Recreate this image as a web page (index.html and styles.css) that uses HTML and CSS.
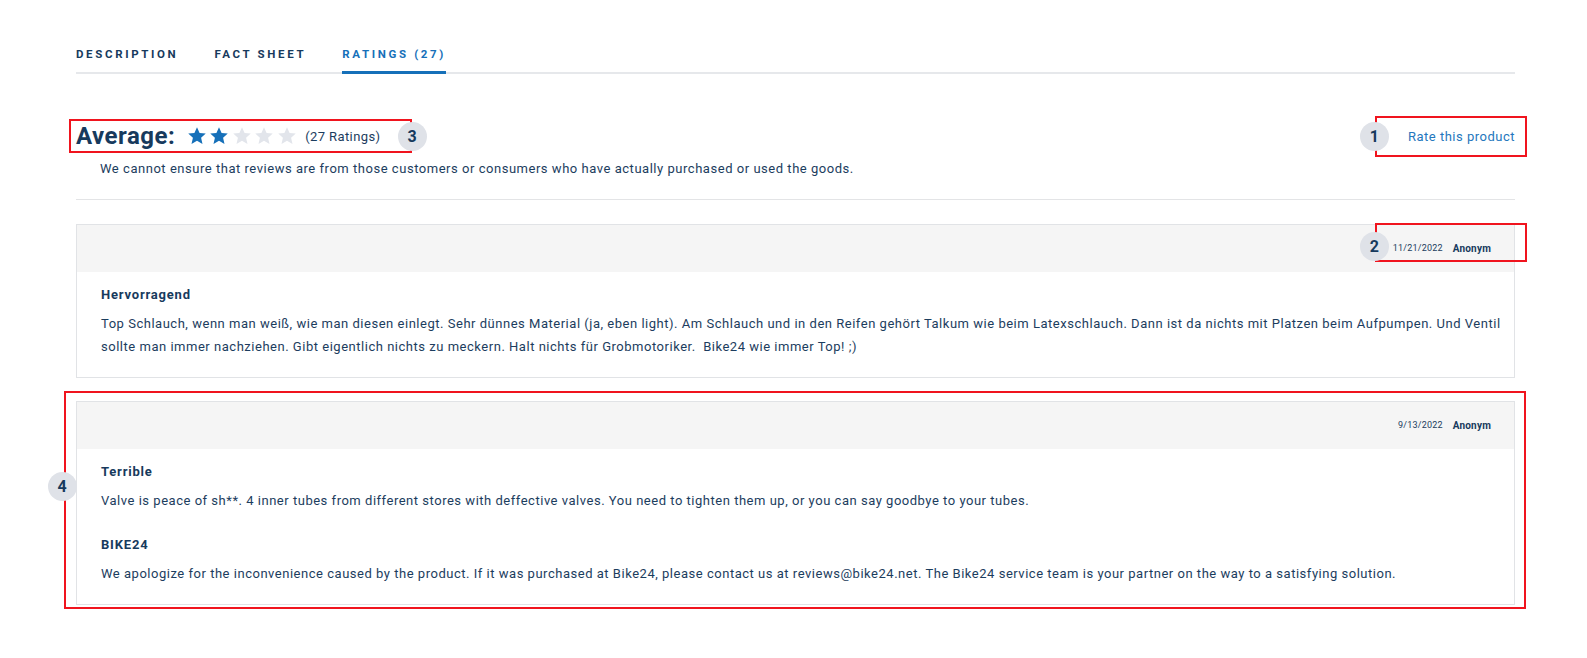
FILE: index.html
```html
<!DOCTYPE html>
<html lang="en">
<head>
<meta charset="utf-8">
<title>Ratings</title>
<link rel="stylesheet" href="styles.css">
</head>
<body>
<div class="page">
  <nav class="tabs">
    <a class="tab">DESCRIPTION</a>
    <a class="tab">FACT SHEET</a>
    <a class="tab tab-active">RATINGS (27)</a>
  </nav>

  <section class="summary">
    <div class="summary-row">
      <div class="average">
        <h2 class="average-title">Average:</h2>
        <span class="stars">
          <svg class="star on" viewBox="0 0 24 24"><path d="M12 1.5l3.1 6.9 7.4.7-5.6 5 1.7 7.4L12 17.6l-6.6 3.9 1.7-7.4-5.6-5 7.4-.7z"/></svg>
          <svg class="star on" viewBox="0 0 24 24"><path d="M12 1.5l3.1 6.9 7.4.7-5.6 5 1.7 7.4L12 17.6l-6.6 3.9 1.7-7.4-5.6-5 7.4-.7z"/></svg>
          <svg class="star" viewBox="0 0 24 24"><path d="M12 1.5l3.1 6.9 7.4.7-5.6 5 1.7 7.4L12 17.6l-6.6 3.9 1.7-7.4-5.6-5 7.4-.7z"/></svg>
          <svg class="star" viewBox="0 0 24 24"><path d="M12 1.5l3.1 6.9 7.4.7-5.6 5 1.7 7.4L12 17.6l-6.6 3.9 1.7-7.4-5.6-5 7.4-.7z"/></svg>
          <svg class="star" viewBox="0 0 24 24"><path d="M12 1.5l3.1 6.9 7.4.7-5.6 5 1.7 7.4L12 17.6l-6.6 3.9 1.7-7.4-5.6-5 7.4-.7z"/></svg>
        </span>
        <span class="count">(27 Ratings)</span>
        <span class="annot annot-average"><span class="badge badge-right">3</span></span>
      </div>
      <div class="rate-wrap">
        <a class="rate">Rate this product</a>
        <span class="annot annot-rate"><span class="badge badge-left">1</span></span>
      </div>
    </div>
    <p class="disclaimer">We cannot ensure that reviews are from those customers or consumers who have actually purchased or used the goods.</p>
  </section>

  <div class="reviews">
    <article class="review">
      <header class="review-head">
        <span class="date">11/21/2022</span>
        <span class="author">Anonym</span>
        <span class="annot annot-meta"><span class="badge badge-meta">2</span></span>
      </header>
      <div class="review-body">
        <h3 class="review-title">Hervorragend</h3>
        <p class="review-text">Top Schlauch, wenn man weiß, wie man diesen einlegt. Sehr dünnes Material (ja, eben light). Am Schlauch und in den Reifen gehört Talkum wie beim Latexschlauch. Dann ist da nichts mit Platzen beim Aufpumpen. Und Ventil sollte man immer nachziehen. Gibt eigentlich nichts zu meckern. Halt nichts für Grobmotoriker.&nbsp; Bike24 wie immer Top! ;)</p>
      </div>
    </article>

    <article class="review review-marked">
      <header class="review-head">
        <span class="date">9/13/2022</span>
        <span class="author">Anonym</span>
      </header>
      <div class="review-body">
        <h3 class="review-title">Terrible</h3>
        <p class="review-text">Valve is peace of sh**. 4 inner tubes from different stores with deffective valves. You need to tighten them up, or you can say goodbye to your tubes.</p>
        <h3 class="review-title reply-title">BIKE24</h3>
        <p class="review-text">We apologize for the inconvenience caused by the product. If it was purchased at Bike24, please contact us at reviews@bike24.net. The Bike24 service team is your partner on the way to a satisfying solution.</p>
      </div>
      <span class="annot annot-card"><span class="badge badge-card">4</span></span>
    </article>
  </div>
</div>
</body>
</html>
```

FILE: styles.css
```css
* { box-sizing: border-box; }

html, body {
  margin: 0;
  padding: 0;
  width: 100%;
  height: 100%;
  overflow: hidden;
  background: #ffffff;
}

body {
  font-family: Roboto, "Noto Sans", "Liberation Sans", sans-serif;
  color: #1c3d5e;
}

.page {
  width: 1439px;
  min-height: 658px;
  margin-left: 76px;
  padding-top: 46px;
}

/* Tabs */
.tabs {
  display: flex;
  gap: 36px;
  border-bottom: 2px solid #e6e8eb;
}

.tab {
  position: relative;
  display: block;
  font-size: 11.5px;
  font-weight: 700;
  letter-spacing: 2.65px;
  line-height: 16px;
  padding-bottom: 10px;
  color: #173a5d;
  cursor: pointer;
}

.tab-active {
  color: #1670b9;
}

.tab-active::after {
  content: "";
  position: absolute;
  left: 0;
  right: 0;
  bottom: -2px;
  height: 3px;
  background: #1670b9;
}

/* Summary */
.summary {
  margin-top: 45px;
}

.summary-row {
  display: flex;
  justify-content: space-between;
  align-items: center;
  height: 34px;
}

.average {
  position: relative;
  display: flex;
  align-items: center;
  height: 34px;
}

.average-title {
  margin: 0 11.5px 0 0;
  font-size: 24px;
  font-weight: 700;
  letter-spacing: 0.5px;
  color: #173a5d;
}

.stars {
  display: flex;
  gap: 2.5px;
  margin-right: 8.5px;
}

.star {
  width: 20px;
  height: 20px;
  fill: #e2e5eb;
}

.star.on {
  fill: #1670b9;
}

.count {
  font-size: 13px;
  letter-spacing: 0.4px;
  color: #1c3d5e;
}

.rate-wrap {
  position: relative;
  height: 34px;
  display: flex;
  align-items: center;
}

.rate {
  font-size: 13px;
  letter-spacing: 0.5px;
  color: #2477bd;
  cursor: pointer;
}

.disclaimer {
  margin: 6px 0 0 0;
  padding: 0 0 20px 24px;
  font-size: 13px;
  letter-spacing: 0.53px;
  line-height: 20px;
  border-bottom: 1px solid #e3e4e6;
}

/* Reviews */
.reviews {
  margin-top: 24px;
  display: flex;
  flex-direction: column;
  gap: 22.7px;
}

.review {
  position: relative;
  border: 1px solid #e1e3e6;
  background: #fff;
}

.review-head {
  position: relative;
  height: 46.5px;
  background: #f5f5f5;
  display: flex;
  justify-content: flex-end;
  align-items: center;
  gap: 10px;
  padding-right: 23px;
}

.date {
  font-size: 9px;
  letter-spacing: 0.2px;
  color: #1c3d5e;
}

.author {
  font-size: 10px;
  font-weight: 700;
  letter-spacing: 0.2px;
  color: #173a5d;
}

.review-body {
  padding: 11.5px 8px 18.5px 24px;
}

.review-title {
  margin: 0 0 5.6px 0;
  font-size: 13px;
  line-height: 23.4px;
  font-weight: 700;
  letter-spacing: 0.8px;
  color: #173a5d;
}

.review-text {
  margin: 0;
  font-size: 13px;
  line-height: 23.4px;
  letter-spacing: 0.52px;
  color: #1c3d5e;
}

.reply-title {
  margin-top: 20.6px;
}

/* Annotation overlays */
.annot {
  position: absolute;
  border: 2px solid #f0141e;
  pointer-events: none;
}

.annot-average {
  left: -7px;
  right: -31.7px;
  top: 0;
  bottom: 0;
}

.annot-rate {
  left: -33px;
  right: -12px;
  top: -3px;
  bottom: -4px;
}

.annot-meta {
  right: -13px;
  top: -1.7px;
  width: 152px;
  height: 38.5px;
}

.annot-card {
  left: -13.3px;
  right: -12px;
  top: -10.6px;
  bottom: -4.8px;
}

.badge {
  position: absolute;
  width: 29px;
  height: 29px;
  border-radius: 50%;
  background: #dfe2e8;
  color: #173a5d;
  font-size: 16px;
  font-weight: 700;
  display: flex;
  align-items: center;
  justify-content: center;
}

.badge-right {
  right: -16.5px;
  top: 50%;
  margin-top: -14.5px;
}

.badge-left {
  left: -17.2px;
  top: 50%;
  margin-top: -14.5px;
}

.badge-meta {
  left: -17.2px;
  top: 6.2px;
}

.badge-card {
  left: -18.2px;
  top: 78.5px;
}
```
